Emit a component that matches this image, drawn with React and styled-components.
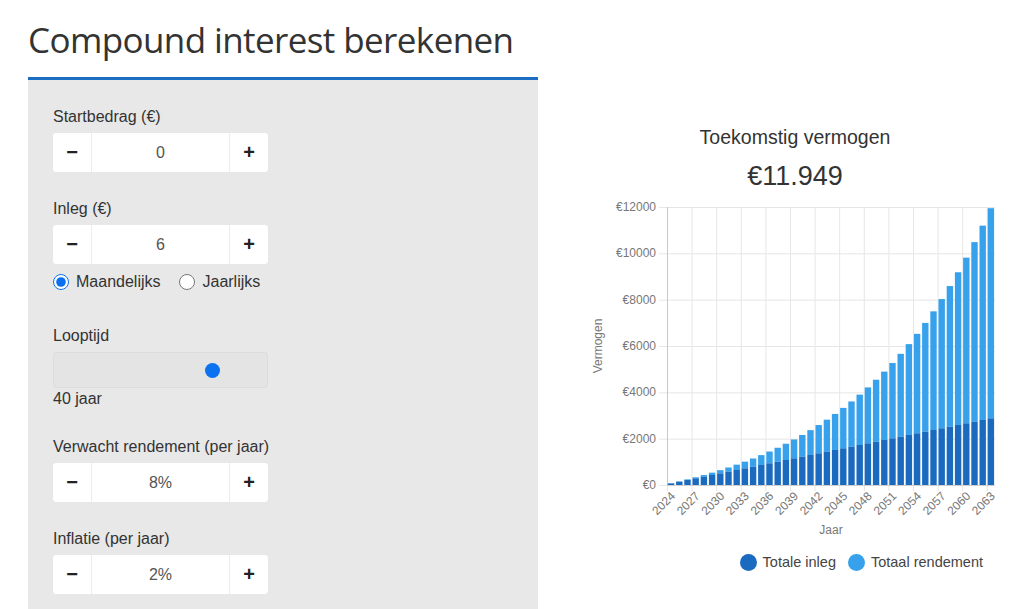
import React from 'react'
import styled, { createGlobalStyle } from 'styled-components'

const GlobalStyle = createGlobalStyle`
  html, body {
    margin: 0;
    padding: 0;
    background: #fff;
  }
  body {
    font-family: "Liberation Sans", Arial, sans-serif;
    color: #333;
    overflow: hidden;
  }
`

const DARK = '#1a6bbf'
const LIGHT = '#37a2eb'

// yearly figures: 6 per month, normalised so the last year ends at 11.949
const buildData = () => {
  const g = 0.0605
  const raw = []
  let total = 0
  for (let n = 1; n <= 40; n++) {
    total = (total + 72) * (1 + g)
    raw.push({ year: 2023 + n, inleg: 72 * n, total })
  }
  const scale = 11949 / raw[raw.length - 1].total
  return raw.map(d => ({ ...d, total: Math.max(d.inleg, d.total * scale) }))
}

const data = buildData()

const Page = styled.div`
  display: flex;
  gap: 47px;
  height: 609px;
  padding-left: 28px;
`

const LeftColumn = styled.div`
  width: 510px;
  display: flex;
  flex-direction: column;
`

const Title = styled.h1`
  margin: 16px 0 13px;
  font-family: "Open Sans", "Noto Sans", sans-serif;
  font-size: 35px;
  font-weight: 400;
  line-height: 48px;
  letter-spacing: -0.6px;
  color: #333;
  white-space: nowrap;
`

const Panel = styled.div`
  flex: 1;
  background: #e8e8e8;
  border-top: 3px solid #1b6ec2;
  padding: 28px 25px 0;
`

const Field = styled.div`
  margin-bottom: ${({ gap }) => gap}px;
`

const Label = styled.div`
  font-size: 16px;
  line-height: 18px;
  color: #333;
  margin-bottom: 7px;
`

const Stepper = styled.div`
  display: flex;
  width: 215px;
  height: 39px;
  background: #fff;
  border-radius: 4px;
  overflow: hidden;
`

const StepButton = styled.button`
  width: 38px;
  flex: none;
  border: none;
  background: #fff;
  padding: 0;
  font-family: "Liberation Sans", Arial, sans-serif;
  font-size: 20px;
  font-weight: 700;
  color: #222;
  display: flex;
  align-items: center;
  justify-content: center;
`

const ValueInput = styled.input`
  flex: 1;
  min-width: 0;
  border: none;
  border-left: 1px solid #ececec;
  border-right: 1px solid #ececec;
  outline: none;
  text-align: center;
  font-family: "Liberation Sans", Arial, sans-serif;
  font-size: 16px;
  color: #555;
  background: #fff;
  padding: 0;
`

const RadioRow = styled.div`
  display: flex;
  align-items: center;
  height: 18px;
  margin-top: 9px;
`

const RadioLabel = styled.label`
  display: flex;
  align-items: center;
  gap: 7px;
  font-size: 16px;
  color: #333;
  margin-right: 19px;
`

const Radio = styled.input`
  width: 16px;
  height: 16px;
  margin: 0;
  accent-color: #0b70f0;
`

const SliderBox = styled.div`
  width: 215px;
  height: 36px;
  box-sizing: border-box;
  border: 1px solid #dcdcdc;
  border-radius: 4px;
  background: #e4e4e4;
  display: flex;
`

const Range = styled.input`
  -webkit-appearance: none;
  appearance: none;
  width: 100%;
  height: 100%;
  margin: 0;
  background: transparent;

  &::-webkit-slider-runnable-track {
    height: 100%;
    background: transparent;
  }
  &::-webkit-slider-thumb {
    -webkit-appearance: none;
    width: 15px;
    height: 15px;
    margin-top: 10px;
    border-radius: 50%;
    background: #0b72f0;
    border: none;
  }
`

const SliderValue = styled.div`
  font-size: 16px;
  line-height: 18px;
  margin-top: 2px;
  color: #333;
`

const RightColumn = styled.div`
  width: 420px;
  padding-top: 126px;
  display: flex;
  flex-direction: column;
  align-items: center;
`

const ChartTitle = styled.div`
  font-size: 19.5px;
  line-height: 22px;
  color: #333;
`

const ChartValue = styled.div`
  font-size: 27px;
  line-height: 30px;
  margin-top: 13px;
  color: #333;
`

const ChartSvg = styled.svg`
  display: block;
  margin-top: 4px;
  font-family: "Liberation Sans", Arial, sans-serif;
`

const Legend = styled.div`
  align-self: stretch;
  display: flex;
  justify-content: flex-end;
  gap: 12px;
  margin-top: 14px;
  padding-right: 22px;
`

const LegendItem = styled.div`
  display: flex;
  align-items: center;
  gap: 6px;
  font-size: 14.5px;
  line-height: 17px;
  color: #444;
`

const Dot = styled.span`
  width: 17px;
  height: 17px;
  border-radius: 50%;
  background: ${({ color }) => color};
`

const NumberField = ({ label, value, gap, children }) => (
  <Field gap={gap}>
    <Label>{label}</Label>
    <Stepper>
      <StepButton type="button">−</StepButton>
      <ValueInput readOnly value={value} />
      <StepButton type="button">+</StepButton>
    </Stepper>
    {children}
  </Field>
)

const PL = 82, PR = 410, PT = 12, PB = 290
const MAX = 12000
const bw = (PR - PL) / data.length
const yOf = v => PB - (v / MAX) * (PB - PT)

const Chart = () => {
  const yTicks = [0, 2000, 4000, 6000, 8000, 10000, 12000]
  const vLines = []
  for (let k = 0; k * 3 < data.length; k++) vLines.push(PL + k * 3 * bw)

  return (
    <ChartSvg width="420" height="345" viewBox="0 0 420 345">
      {yTicks.map(t => (
        <g key={t}>
          <line x1={74} x2={PR} y1={yOf(t) + 0.5} y2={yOf(t) + 0.5} stroke="#e6e6e6" />
          <text x={71} y={yOf(t)} textAnchor="end" dominantBaseline="central" fontSize="12" fill="#777">
            €{t}
          </text>
        </g>
      ))}
      {vLines.map((x, i) => (
        <line key={i} x1={x + 0.5} x2={x + 0.5} y1={PT} y2={PB + 6} stroke="#e6e6e6" />
      ))}
      <line x1={PL + 0.5} x2={PL + 0.5} y1={PT} y2={PB} stroke="#c8c8c8" />
      <line x1={PL} x2={PR} y1={PB + 0.5} y2={PB + 0.5} stroke="#d0d0d0" />

      {data.map((d, i) => {
        const x = PL + i * bw + (bw - 6.4) / 2
        return (
          <g key={d.year}>
            <rect x={x} y={yOf(d.total)} width={6.4} height={yOf(d.inleg) - yOf(d.total)} fill={LIGHT} />
            <rect x={x} y={yOf(d.inleg)} width={6.4} height={PB - yOf(d.inleg)} fill={DARK} />
          </g>
        )
      })}

      {data.map((d, i) => i % 3 === 0 && (
        <text
          key={d.year}
          transform={`translate(${PL + (i + 0.5) * bw + 2}, ${PB + 9}) rotate(-45)`}
          textAnchor="end"
          dominantBaseline="central"
          fontSize="12"
          fill="#777"
        >
          {d.year}
        </text>
      ))}

      <text x={246} y={335} textAnchor="middle" dominantBaseline="central" fontSize="12" fill="#777">Jaar</text>
      <text
        transform={`translate(13, 151) rotate(-90)`}
        textAnchor="middle"
        dominantBaseline="central"
        fontSize="12"
        fill="#777"
      >
        Vermogen
      </text>
    </ChartSvg>
  )
}

export default function App() {
  return (
    <>
      <GlobalStyle />
      <Page>
        <LeftColumn>
          <Title>Compound interest berekenen</Title>
          <Panel>
            <NumberField label="Startbedrag (€)" value="0" gap={28} />
            <NumberField label="Inleg (€)" value="6" gap={36}>
              <RadioRow>
                <RadioLabel>
                  <Radio type="radio" name="freq" defaultChecked />
                  Maandelijks
                </RadioLabel>
                <RadioLabel>
                  <Radio type="radio" name="freq" />
                  Jaarlijks
                </RadioLabel>
              </RadioRow>
            </NumberField>
            <Field gap={30}>
              <Label>Looptijd</Label>
              <SliderBox>
                <Range type="range" min="1" max="52" defaultValue="40" />
              </SliderBox>
              <SliderValue>40 jaar</SliderValue>
            </Field>
            <NumberField label="Verwacht rendement (per jaar)" value="8%" gap={28} />
            <NumberField label="Inflatie (per jaar)" value="2%" gap={0} />
          </Panel>
        </LeftColumn>
        <RightColumn>
          <ChartTitle>Toekomstig vermogen</ChartTitle>
          <ChartValue>€11.949</ChartValue>
          <Chart />
          <Legend>
            <LegendItem><Dot color={DARK} />Totale inleg</LegendItem>
            <LegendItem><Dot color={LIGHT} />Totaal rendement</LegendItem>
          </Legend>
        </RightColumn>
      </Page>
    </>
  )
}
